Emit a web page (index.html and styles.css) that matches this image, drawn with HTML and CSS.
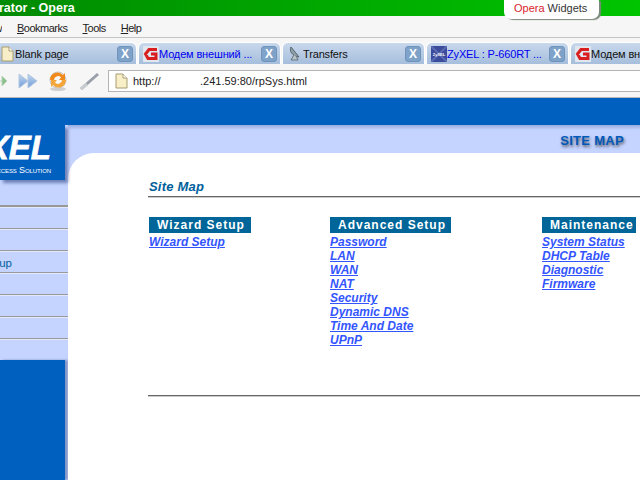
FILE: index.html
```html
<!DOCTYPE html>
<html lang="en">
<head>
<meta charset="utf-8">
<title>Opera</title>
<link rel="stylesheet" href="styles.css">
</head>
<body>
<div class="window">
  <header class="titlebar"><span class="title-text">rator - Opera</span></header>
  <div class="widgets"><span class="widgets-opera">Opera</span><span>Widgets</span></div>
  <nav class="menubar">
    <span class="menu-clip">w</span>
    <span><u>B</u>ookmarks</span>
    <span><u>T</u>ools</span>
    <span><u>H</u>elp</span>
  </nav>
  <div class="tabstrip">
    <div class="tab tab-first">
      <svg class="fav" viewBox="0 0 14 16"><path d="M2 1h7l4 4v10H2z" fill="#f8efc8" stroke="#a89c70"/><path d="M9 1v4h4" fill="#fff" stroke="#a89c70"/></svg>
      <span class="tab-label">Blank page</span><span class="close">X</span>
    </div>
    <div class="tab">
      <svg class="fav" viewBox="0 0 16 16"><rect width="16" height="16" fill="#e2e6ee"/><path d="M14 3.500H6L2.500 8 5 12.500h8V8H8" fill="none" stroke="#d81e1e" stroke-width="3"/></svg>
      <span class="tab-label tab-loaded">Модем внешний ...</span><span class="close">X</span>
    </div>
    <div class="tab">
      <svg class="fav" viewBox="0 0 16 16"><path d="M4 1c-2 4 1 9 8 10z" fill="#8fa0a8" stroke="#56666e"/><path d="M7 9l-3 5h7l-2-4" fill="#b8c4ca" stroke="#66767e"/></svg>
      <span class="tab-label">Transfers</span><span class="close">X</span>
    </div>
    <div class="tab">
      <svg class="fav" viewBox="0 0 16 16"><rect width="16" height="16" fill="#3c4c9c"/><path d="M0 0l16 16M16 0L0 16" stroke="#5a6ab4" stroke-width="2"/><text x="8" y="10" text-anchor="middle" class="fav-zyxel">ZyXEL</text></svg>
      <span class="tab-label tab-loaded">ZyXEL : P-660RT ...</span><span class="close">X</span>
    </div>
    <div class="tab">
      <svg class="fav" viewBox="0 0 16 16"><rect width="16" height="16" fill="#e2e6ee"/><path d="M14 3.500H6L2.500 8 5 12.500h8V8H8" fill="none" stroke="#d81e1e" stroke-width="3"/></svg>
      <span class="tab-label">Модем внешний ...</span><span class="close">X</span>
    </div>
  </div>
  <div class="toolbar">
    <svg class="tool tool-back" width="8" height="20" viewBox="0 0 8 20"><path d="M-4 10h6V5l5 5-5 5v-5" fill="#8cc08c" stroke="#b8d4b8"/></svg>
    <svg class="tool tool-forward" width="22" height="20" viewBox="0 0 22 20"><defs><linearGradient id="fw" x1="0" y1="0" x2="0" y2="1"><stop offset="0" stop-color="#c4d8f0"/><stop offset="1" stop-color="#6f9cd8"/></linearGradient></defs><path d="M2 3l9 7-9 7zM11 3l9 7-9 7z" fill="url(#fw)" stroke="#b4c8e0"/></svg>
    <svg class="tool tool-reload" width="22" height="22" viewBox="0 0 22 22"><ellipse cx="11" cy="19" rx="8" ry="2" fill="#d0d0d0"/><circle cx="11" cy="10" r="8" fill="#fafafa" stroke="#c4c4c4"/><path d="M3 10a7.500 7.500 0 0 1 13-5l2-2v7h-6l2-2.500a4 4 0 0 0-7 2.500z" fill="#f08a1c"/><path d="M19 10a7.500 7.500 0 0 1-13 5l-2 2v-7h6l-2 2.500a4 4 0 0 0 7-2.500z" fill="#f4a63a"/></svg>
    <svg class="tool tool-wand" width="22" height="20" viewBox="0 0 22 20"><path d="M2 18L19 3" stroke="#9aa0aa" stroke-width="3"/><path d="M2 18l6-5" stroke="#c8ccd0" stroke-width="3"/></svg>
    <div class="address">
      <svg class="addr-icon" viewBox="0 0 14 16"><path d="M2 1h7l4 4v10H2z" fill="#f8efc8" stroke="#a89c70"/><path d="M9 1v4h4" fill="#fff" stroke="#a89c70"/></svg>
      <span class="addr-scheme">http://</span><span class="addr-rest">.241.59:80/rpSys.html</span>
    </div>
  </div>
  <div class="page">
    <div class="banner"></div>
    <div class="page-body">
      <aside class="sidebar">
        <div class="logo">
          <div class="logo-name">ZyXEL</div>
          <div class="logo-tag">Total Internet Access Solution</div>
        </div>
        <div class="side-gap"></div>
        <div class="side-row"></div>
        <div class="side-row"></div>
        <div class="side-row"><span class="side-link">Setup</span></div>
        <div class="side-row"></div>
        <div class="side-row"></div>
        <div class="side-row"></div>
        <div class="side-row side-last"></div>
        <div class="side-fill"></div>
      </aside>
      <main class="main">
        <div class="band"><span class="band-title">SITE MAP</span></div>
        <div class="sheet">
          <h1 class="heading">Site Map</h1>
          <div class="columns">
            <section class="column">
              <h2 class="col-head col-wizard">Wizard Setup</h2>
              <a class="link" href="#">Wizard Setup</a>
            </section>
            <section class="column">
              <h2 class="col-head col-advanced">Advanced Setup</h2>
              <a class="link" href="#">Password</a>
              <a class="link" href="#">LAN</a>
              <a class="link" href="#">WAN</a>
              <a class="link" href="#">NAT</a>
              <a class="link" href="#">Security</a>
              <a class="link" href="#">Dynamic DNS</a>
              <a class="link" href="#">Time And Date</a>
              <a class="link" href="#">UPnP</a>
            </section>
            <section class="column">
              <h2 class="col-head col-maint">Maintenance</h2>
              <a class="link" href="#">System Status</a>
              <a class="link" href="#">DHCP Table</a>
              <a class="link" href="#">Diagnostic</a>
              <a class="link" href="#">Firmware</a>
            </section>
          </div>
          <div class="rule-bottom"></div>
        </div>
      </main>
    </div>
  </div>
</div>
</body>
</html>
```

FILE: styles.css
```css
* { box-sizing: border-box; }
html, body { margin: 0; padding: 0; }
body { width: 640px; height: 480px; overflow: hidden; background: #fff; font-family: "Liberation Sans", Arial, sans-serif; }
.window { position: relative; width: 640px; height: 480px; display: flex; flex-direction: column; overflow: hidden; }

.titlebar { height: 16px; flex: none; background: linear-gradient(90deg, #008a00, #00a800 50%, #00c400); color: #fff; font-weight: bold; font-size: 12.5px; line-height: 17px; }
.title-text { display: block; margin-left: -1px; }
.widgets { position: absolute; left: 504px; top: 0; width: 95px; height: 19px; background: #fff; border-radius: 0 0 7px 7px; box-shadow: 2px 1px 1px #7a8a7a; font-size: 11px; line-height: 17px; color: #333; padding-left: 10px; display: flex; gap: 3px; }
.widgets-opera { color: #d8262c; }

.menubar { height: 22px; flex: none; background: #f6f6f6; border-bottom: 1px solid #c4c4c4; display: flex; align-items: center; font-size: 11px; letter-spacing: -.5px; color: #222; padding-top: 2px; gap: 15px; }
.menu-clip { width: 2px; margin-right: 0; overflow: hidden; direction: rtl; }

.tabstrip { height: 26px; flex: none; background: #f6f6f6; display: flex; gap: 3px; align-items: flex-end; margin-left: -5px; overflow: hidden; white-space: nowrap; }
.tab { width: 141px; height: 21px; flex: none; background: linear-gradient(#c8d8ec, #a6bedc); border-radius: 5px 5px 0 0; box-shadow: 0 0 0 1px #fff; display: flex; align-items: center; padding: 0 3px 0 4px; color: #111; }
.fav { width: 16px; height: 16px; flex: none; }
.fav-zyxel { font: bold 4px "Liberation Sans", sans-serif; fill: #fff; }
.tab-label { flex: 1; overflow: hidden; font-size: 11px; letter-spacing: -.15px; padding-top: 1px; }
.tab-loaded { color: #0000f0; }
.close { width: 16px; height: 16px; flex: none; border-radius: 3px; background: #7fa2c8; border: 1px solid #6f94bc; color: #fff; font-weight: bold; font-size: 12px; line-height: 14px; text-align: center; }

.toolbar { height: 34px; flex: none; background: #f6f6f6; border-bottom: 1px solid #b8b8b8; display: flex; align-items: flex-start; padding-top: 6px; }
.tool { flex: none; margin-top: 1px; }
.tool-back { margin-right: 9px; }
.tool-forward { margin-right: 8px; }
.tool-reload { margin-top: 0; margin-right: 10px; }
.tool-wand { margin-right: 7px; }
.address { flex: 1; height: 22px; margin-right: -10px; background: #fff; border: 1px solid #b4b4b4; display: flex; align-items: center; font-size: 11px; color: #222; padding-left: 5px; }
.addr-icon { width: 14px; height: 16px; flex: none; margin-right: 5px; }
.addr-scheme { width: 67px; flex: none; }

.page { flex: 1; display: flex; flex-direction: column; background: #0060c0; min-height: 0; }
.banner { height: 27px; flex: none; background: #0060c0; }
.page-body { flex: 1; display: flex; min-height: 0; }

.sidebar { width: 68px; flex: none; display: flex; flex-direction: column; background: #c4d4ff; }
.logo { width: 65px; height: 55px; flex: none; position: relative; z-index: 1; background: #0060c0; box-shadow: 3px 3px 3px rgba(40, 60, 120, .55); color: #fff; overflow: hidden; display: flex; flex-direction: column; align-items: flex-end; padding-right: 14px; }
.logo-name { font-size: 33px; font-weight: bold; font-style: italic; line-height: 26px; margin-top: 10px; white-space: nowrap; -webkit-text-stroke: .8px #fff; }
.logo-tag { font-size: 9px; font-variant: small-caps; line-height: 10px; margin-top: 4px; white-space: nowrap; letter-spacing: -.1px; }
.side-gap { height: 27px; flex: none; border-bottom: 2px solid #999; }
.side-row { height: 22px; flex: none; border-top: 1px solid #e2e9ff; border-bottom: 1px solid #999; overflow: hidden; font-size: 11.5px; color: #00609c; line-height: 22px; display: flex; justify-content: flex-end; padding-right: 56px; white-space: nowrap; }
.side-last { height: 21px; border-bottom: 0; }
.side-fill { flex: 1; width: 65px; background: #0060c0; box-shadow: 3px 0 2px rgba(40, 60, 120, .4); }

.main { flex: 1; display: flex; flex-direction: column; background: #c4d4ff; min-width: 0; }
.band { height: 28px; flex: none; background: linear-gradient(#98acdc, #c4d4ff 5px); display: flex; justify-content: flex-end; align-items: flex-start; padding: 9px 16px 0 0; }
.band-title { font-size: 13px; font-weight: bold; line-height: 14px; letter-spacing: .3px; color: #0058b8; text-shadow: 1px 2px 3px #556; }
.sheet { flex: 1; background: #fff; border-top-left-radius: 26px; padding: 27px 0 0 81px; }
.heading { margin: 0 -10px 0 -1px; padding-left: 1px; height: 17px; border-bottom: 1px solid #666; box-shadow: 0 1px #ccc; font-size: 13px; font-style: italic; font-weight: bold; line-height: 14px; letter-spacing: .2px; color: #00609c; }
.columns { display: grid; grid-template-columns: 181px 212px 1fr; margin-top: 20px; height: 178px; }
.column { display: flex; flex-direction: column; align-items: flex-start; }
.col-head { margin: 0 0 2px; height: 16px; background: #006699; color: #fff; font-size: 12px; font-weight: bold; line-height: 16px; letter-spacing: 1px; white-space: nowrap; padding-left: 8px; }
.col-wizard { width: 102px; }
.col-advanced { width: 121px; }
.col-maint { width: 94px; }
.link { font-size: 12px; font-style: italic; font-weight: bold; line-height: 14px; color: #3355ff; text-decoration: underline; white-space: nowrap; }
.rule-bottom { height: 1px; background: #666; box-shadow: 0 1px #ccc; margin: 0 -10px 0 -1px; }
```
